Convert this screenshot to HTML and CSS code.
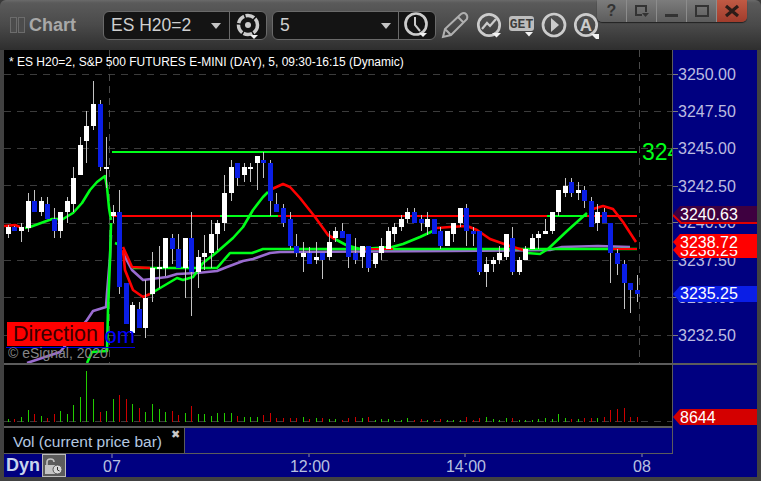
FILE: index.html
```html
<!DOCTYPE html>
<html lang="en">
<head>
<meta charset="utf-8">
<title>Chart</title>
<link rel="stylesheet" href="styles.css">
</head>
<body>
<div class="window">
  <header class="titlebar">
    <div class="title">
      <span class="grip"></span><span class="grip"></span>
      <span class="title-text">Chart</span>
    </div>
    <div class="combo combo-symbol">
      <span class="combo-value">ES H20=2</span>
      <span class="caret"></span>
      <span class="combo-btn">
        <svg class="icon-24" viewBox="0 0 26 28">
          <circle class="ring-dash" cx="13" cy="13" r="9.500"/>
          <circle class="fill-light" cx="13" cy="13" r="3"/>
          <path class="fill-white" d="M15 23h8l-4 4z"/>
        </svg>
      </span>
    </div>
    <div class="combo combo-interval">
      <span class="combo-value">5</span>
      <span class="caret"></span>
      <span class="combo-btn">
        <svg class="icon-24" viewBox="0 0 26 28">
          <circle class="ring" cx="12" cy="12" r="10.500"/>
          <path class="stroke-thin" d="M11 5v8l5 6"/>
          <path class="fill-white" d="M15 21h8l-4 4z"/>
        </svg>
      </span>
    </div>
    <svg class="tools" viewBox="436 0 162 50">
      <path class="stroke-pencil" d="M442 37l2-8 16-15q3-2 5 0t1 5l-16 16zM444 29l6 6M457 17l6 6"/>
      <circle class="ring" cx="488" cy="25" r="10.700"/>
      <path class="stroke-zig" d="M481 29l5-6 3 3 6-7"/>
      <path class="fill-white" d="M491 33h9l-4.500 4.500z"/>
      <rect class="get-bg" x="508" y="16" width="25" height="15" rx="3"/>
      <text class="get-text" x="520.500" y="28">GET</text>
      <path class="fill-white" d="M524 32h8l-4 4.500z"/>
      <circle class="ring" cx="553" cy="25" r="11"/>
      <path class="fill-light" d="M550 18l8 7-8 7z"/>
      <circle class="ring" cx="585" cy="25" r="10.700"/>
      <text class="a-text" x="585" y="31">A</text>
      <path class="fill-white" d="M590 34h8v5h-3z"/>
    </svg>
    <div class="controls">
      <span class="ctl">?</span>
      <span class="ctl"><svg class="ctl-icon" viewBox="0 0 16 14"><path class="ctl-stroke" d="M12 8V2H2v9h6"/><path class="ctl-fill" d="M8 9h7l-3.500 4z"/></svg></span>
      <span class="ctl"><svg class="ctl-icon" viewBox="0 0 16 14"><rect class="ctl-fill" x="1" y="10" width="13" height="3"/></svg></span>
      <span class="ctl"><svg class="ctl-icon" viewBox="0 0 16 14"><path class="ctl-stroke" d="M2 2h12v10H2z"/></svg></span>
      <span class="ctl ctl-close"><svg class="ctl-icon" viewBox="0 0 16 14"><path class="ctl-x" d="M2 2l12 10M14 2L2 12"/></svg></span>
    </div>
  </header>

  <div class="panes">
    <div class="row row-price">
      <div class="plot">
        <svg id="chart" class="plot-svg" viewBox="4 50 668 313"></svg>
        <div class="study-title">* ES H20=2, S&amp;P 500 FUTURES E-MINI (DAY), 5, 09:30-16:15 (Dynamic)</div>
        <div class="link-text">om</div>
        <div class="direction">Direction</div>
        <div class="copyright">© eSignal, 2020</div>
      </div>
      <svg id="axis" class="axis-svg" viewBox="673 50 84 313"></svg>
    </div>

    <div class="row row-volume">
      <svg id="volume" class="vol-svg" viewBox="4 365 668 61"></svg>
      <svg class="axis-svg" viewBox="673 365 84 61">
        <path class="badge-vol" d="M673 417l7-8h77v16h-77z"/>
        <text class="badge-text" x="680" y="423">8644</text>
      </svg>
    </div>

    <div class="row row-legend">
      <div class="vol-legend">
        <span class="vol-name">Vol (current price bar)</span>
        <span class="vol-close">✖</span>
      </div>
    </div>

    <div class="row row-time">
      <span class="dyn">Dyn</span>
      <span class="lock">
        <svg class="lock-icon" viewBox="0 0 20 18">
          <path class="lock-stroke" d="M3 9V5q0-3 3.500-3T10 5"/>
          <rect class="lock-fill" x="1" y="8" width="10" height="9"/>
          <circle class="lock-clock" cx="13.500" cy="12.500" r="4.500"/>
          <path class="lock-hand" d="M13.500 10v3l2 1"/>
        </svg>
      </span>
      <svg class="time-svg" viewBox="65 455 692 22">
        <path class="tick" d="M112 455v4M309 455v3M465 455v3M642 455v3"/>
        <text class="time-text" x="112" y="473">07</text>
        <text class="time-text" x="310" y="473">12:00</text>
        <text class="time-text" x="466" y="473">14:00</text>
        <text class="time-text" x="642" y="473">08</text>
      </svg>
    </div>
  </div>
</div>
<script src="chart.js"></script>
</body>
</html>
```

FILE: styles.css
```css
* { box-sizing: border-box; }
html, body { margin: 0; padding: 0; background: #3a3a3a; }
body { width: 761px; height: 481px; overflow: hidden; font-family: "Liberation Sans", Arial, sans-serif; }

.window { width: 761px; height: 481px; display: flex; flex-direction: column; padding: 0 4px 4px; background: #414141; border-radius: 6px 6px 0 0; }

.titlebar { height: 50px; margin: 0 -4px; padding: 11px 0 0 10px; display: flex; align-items: flex-start; position: relative; background: linear-gradient(#6a6a6a 0, #5a5a5a 3px, #4a4a4a 25px, #2e2e2e 50px); border-radius: 6px 6px 0 0; }
.title { width: 93px; height: 28px; display: flex; align-items: center; }
.grip { width: 7px; height: 16px; margin-right: 1px; border: 1px solid #6c6c6c; background: #4c4c4c; }
.title-text { margin-left: 3px; font-size: 18px; font-weight: 700; color: #a8a8a8; }

.combo { height: 29px; display: flex; align-items: center; background: #141414; border: 1px solid #6a6a6a; border-radius: 6px; position: relative; }
.combo-symbol { width: 164px; margin-right: 5px; }
.combo-interval { width: 164px; margin-right: 1px; }
.combo-value { margin-left: 7px; font-size: 17.500px; color: #cfcfcf; flex: 1; white-space: nowrap; }
.caret { width: 0; height: 0; border-left: 5px solid transparent; border-right: 5px solid transparent; border-top: 6px solid #c4c4c4; margin-right: 7px; }
.combo-btn { width: 37px; height: 27px; border-left: 1px solid #6a6a6a; display: flex; justify-content: center; align-items: center; }
.combo-symbol .caret { margin-right: 8px; }
.icon-24 { width: 26px; height: 28px; }

.ring { fill: none; stroke: #cccccc; stroke-width: 2.700; }
.ring-dash { fill: none; stroke: #cccccc; stroke-width: 3.500; stroke-dasharray: 9 1.500; }
.stroke-thin { fill: none; stroke: #cccccc; stroke-width: 2; }
.stroke-pencil { fill: none; stroke: #b0b0b0; stroke-width: 2; }
.stroke-zig { fill: none; stroke: #cccccc; stroke-width: 2.200; }
.fill-white { fill: #f2f2f2; }
.fill-light { fill: #cccccc; }
.get-bg { fill: #bdbdbd; }
.get-text { font-family: "Liberation Mono", monospace; font-size: 13px; font-weight: 700; fill: #3c3c3c; text-anchor: middle; }
.a-text { font-family: "Liberation Sans", Arial, sans-serif; font-size: 17px; font-weight: 700; fill: #cccccc; text-anchor: middle; }
.tools { width: 162px; height: 50px; margin-top: -11px; flex: none; }

.controls { position: absolute; top: 0; left: 597px; width: 150px; height: 22px; display: flex; border-radius: 0 0 5px 5px; overflow: hidden; box-shadow: 0 1px 1px #222; }
.ctl { width: 30px; height: 22px; display: flex; align-items: center; justify-content: center; background: linear-gradient(#7c7c7c, #5c5c5c); border-right: 1px solid #8c8c8c; font-size: 16px; font-weight: 700; color: #333; }
.ctl-close { background: linear-gradient(#c05a44, #a03c2c); border-right: 0; }
.ctl-icon { width: 16px; height: 14px; }
.ctl-stroke { fill: none; stroke: #333; stroke-width: 2; }
.ctl-fill { fill: #333; }
.ctl-x { fill: none; stroke: #2c1c18; stroke-width: 3.200; }

.panes { flex: 1; display: flex; flex-direction: column; background: #000080; }
.row { display: flex; }
.row-price { border-bottom: 2px solid #5c5c5c; height: 315px; }
.plot { width: 668px; height: 313px; position: relative; overflow: hidden; background: #000; }
.plot-svg { width: 668px; height: 313px; display: block; }
.axis-svg { width: 85px; height: 100%; display: block; border-left: 1px solid #5c5c5c; }

.row-volume { height: 62px; }
.vol-svg { width: 668px; height: 61px; display: block; background: #000; }
.row-volume .axis-svg { height: 61px; }
.row-legend { height: 28px; border-top: 2px solid #5c5c5c; margin-top: -1px; width: 669px; border-right: 1px solid #5c5c5c; border-bottom: 1px solid #5c5c5c; }
.vol-legend { width: 181px; height: 100%; display: flex; position: relative; background: #000; border-right: 1px solid #5c5c5c; }
.vol-name { margin: 5px 0 0 9px; font-size: 15.500px; color: #b4c8e0; white-space: nowrap; }
.vol-close { position: absolute; left: 167px; top: 0; font-size: 11px; color: #c8c8c8; font-family: "DejaVu Sans", sans-serif; }
.row-time { height: 23px; align-items: flex-start; }
.dyn { width: 38px; padding-left: 2px; font-size: 18px; font-weight: 700; color: #c8d4ec; line-height: 22px; }
.lock { width: 24px; height: 23px; flex: none; display: flex; align-items: center; justify-content: center; background: #5c5c5c; border: 1px solid #bcbcbc; }
.lock-icon { width: 20px; height: 18px; }
.lock-stroke { fill: none; stroke: #c4c4c4; stroke-width: 1.600; }
.lock-fill { fill: #c4c4c4; }
.lock-clock { fill: #d8d8d8; stroke: #555; }
.lock-hand { fill: none; stroke: #333; }
.time-svg { width: 692px; height: 22px; display: block; flex: none; margin-left: -1px; }
.tick { fill: none; stroke: #8a8ab0; stroke-width: 1; }
.time-text { font-family: "Liberation Sans", Arial, sans-serif; font-size: 16px; fill: #b8c0e0; text-anchor: middle; }

.study-title { position: absolute; left: 5px; top: 5px; font-size: 12px; color: #fff; white-space: nowrap; }
.direction { position: absolute; left: 3px; top: 272px; width: 97px; height: 24px; background: #ff0000; color: #3a0000; font-size: 21.500px; line-height: 24px; text-align: center; }
.link-text { position: absolute; left: 2px; top: 274px; width: 129px; height: 24px; border-bottom: 1px solid #0000e0; color: #0000ff; font-size: 22px; line-height: 23px; text-align: right; }
.copyright { position: absolute; left: 4px; top: 295px; width: 100px; height: 17px; overflow: hidden; font-size: 14px; line-height: 17px; color: #868686; white-space: nowrap; }

.grid { stroke: #3c3c3c; stroke-width: 1; stroke-dasharray: 7 6; fill: none; }
.grid-v { stroke: #4a4a4a; stroke-width: 1; stroke-dasharray: 7 5; fill: none; }
.line { fill: none; stroke-width: 2.600; stroke-linejoin: round; }
.line-flat { stroke-width: 2; shape-rendering: crispEdges; }
.line-green { stroke: #00ff19; }
.line-red { stroke: #ff0000; }
.line-purple { stroke: #9a6cd0; }
.wick { fill: #c4c4c4; }
.body-up { fill: #ffffff; }
.body-down { fill: #0a1ee6; }
.last-level { font-family: "Liberation Sans", Arial, sans-serif; font-size: 23px; fill: #00ff19; }
.bar-up { fill: #22cc00; }
.bar-down { fill: #cc0000; }

.axis-text { font-family: "Liberation Sans", Arial, sans-serif; font-size: 16px; fill: #bcbce0; }
.axis-tick { stroke: #7c7c7c; stroke-width: 1; fill: none; }
.badge-text { font-family: "Liberation Sans", Arial, sans-serif; font-size: 16px; fill: #fff; }
.badge-purple { fill: #3e0040; }
.badge-red { fill: #ff0000; }
.badge-blue { fill: #0a1ee6; }
.badge-vol { fill: #d40000; }
.badge-rule { fill: none; stroke: #e00000; stroke-width: 2; }
```

FILE: chart.js
```js
var NS = "http://www.w3.org/2000/svg";
function el(parent, tag, attrs, text) {
  var e = document.createElementNS(NS, tag);
  for (var k in attrs) e.setAttribute(k, attrs[k]);
  if (text) e.textContent = text;
  parent.appendChild(e);
  return e;
}
function xOf(i) { return Math.round(27.5 + 6.55 * (i - 3)); }

/* top, bottom, high, low, up(1)/down(0) */
var candles = [
[227,234,225,238,1],[227,231,226,231,0],[227,231,223,242,1],[201,228,193,232,1],[201,212,190,212,0],
[201,212,197,216,1],[204,219,197,219,0],[219,231,208,238,0],[212,231,212,238,1],[201,212,197,223,1],
[178,204,167,212,1],[145,175,137,175,1],[126,141,111,163,1],[104,126,81,130,1],[104,167,100,171,0],
[167,169,137,188,1],[212,216,205,223,1],[212,287,190,294,0],[283,324,283,324,0],[305,333,302,343,1],
[309,328,302,328,0],[298,328,280,338,1],[268,294,252,302,1],[267,269,246,288,1],[238,268,238,276,1],
[238,249,234,264,0],[249,268,234,268,0],[238,268,238,298,1],[238,272,212,316,0],[257,272,250,288,1],
[253,257,235,270,1],[234,253,220,268,1],[223,234,220,250,1],[193,223,175,231,1],[167,193,160,201,1],
[163,178,163,186,0],[167,175,163,182,1],[167,169,163,182,1],[156,163,156,190,1],[160,163,152,178,0],
[163,201,160,216,0],[204,212,193,212,0],[208,223,204,227,0],[219,246,212,249,0],[246,253,234,257,0],
[253,257,242,272,1],[253,264,247,264,0],[257,260,242,264,1],[253,260,253,279,0],[242,257,231,260,1],
[231,238,227,242,1],[231,238,223,238,0],[234,257,234,268,0],[253,260,238,264,0],[246,257,246,268,1],
[246,268,246,272,0],[253,264,253,268,1],[246,253,238,260,1],[231,249,227,249,1],[227,234,223,242,1],
[219,227,215,231,1],[212,219,208,223,1],[212,223,208,223,0],[219,223,215,231,0],[219,227,212,235,1],
[219,234,219,234,0],[231,246,227,249,0],[231,246,231,246,1],[223,234,223,242,1],[208,223,208,227,1],
[208,231,204,246,0],[231,234,227,246,0],[231,272,231,275,0],[264,272,257,287,1],[260,264,257,272,1],
[253,260,246,264,1],[234,257,234,260,1],[238,272,227,275,0],[260,272,257,275,1],[249,260,246,260,1],
[238,249,234,249,1],[234,238,231,249,1],[231,234,219,234,1],[212,231,212,234,1],[190,212,190,216,1],
[186,193,178,197,1],[182,193,178,197,0],[190,193,182,200,1],[190,201,186,208,0],[201,227,197,227,0],
[212,223,204,231,1],[212,223,208,223,0],[223,253,223,283,0],[253,264,249,275,0],[264,283,260,309,0],
[283,290,283,313,0],[290,294,275,302,0]
];

var vol = [3,-3,5,12,-8,6,-4,-8,11,8,17,25,51,23,-10,11,23,-27,-23,18,-14,10,18,13,10,-11,-7,9,-16,8,8,6,9,9,9,-6,
5,5,5,-7,-9,-4,-4,-4,-4,5,-3,4,-4,3,3,-2,-4,-5,4,-5,2,3,3,2,2,4,-2,-3,2,-2,-3,2,
2,2,-5,-2,-4,5,3,2,4,-4,2,2,2,3,4,3,8,4,-3,3,-4,-4,4,-5,-12,-13,-14,-5,-5];

var purple = [
"27,363 60,352 87,320 93,311 106,307 107,293 110,257 111,235",
"123,253 132,270 143,280 167,277 177,274 197,273 217,271 227,267 243,261 253,259 270,253 280,252 450,251 550,250 562,247 598,246 630,247"
];
var green = [
"112,152 637,152",
"220,216 278,216",
"547,216 587,216",
"87,363 92,352 107,351 108,310 110,260 111,223",
"115,243 120,245",
"133,268 217,268 230,253 252,253 263,249 637,249",
"25,228 30,227 52,219 63,219 73,213 82,203 90,190 97,182 105,176 107,187 109,208 111,220",
"150,294 177,278 183,280 193,277 203,263 217,252 233,238 243,227 253,210 263,197 268,192",
"335,239 346,245 360,249 392,247 403,244 420,237 433,231",
"527,253 540,254 548,249 567,231 587,213"
];
var red = [
"112,216 220,216",
"278,216 547,216",
"587,216 637,216",
"4,226 15,225 20,227",
"123,247 132,267 150,268",
"123,250 125,270 133,290 143,297 150,294",
"272,189 283,184 290,187 300,198 315,217 328,235 335,239",
"437,228 450,227 467,226 477,230 490,239 507,245 523,250",
"593,209 603,206 613,209 623,222 636,242",
"363,249 393,249",
"610,249 637,249"
];

function drawLine(points, colour) {
  var flat = /^\d+,(\d+) \d+,\1$/.test(points);
  el(chart, "polyline", { "class": "line " + colour + (flat ? " line-flat" : ""), points: points });
}

var chart = document.getElementById("chart");
[74,111,148,185,223,260,297,335].forEach(function (y) {
  el(chart, "line", { "class": "grid", x1: 4, y1: y + 0.5, x2: 672, y2: y + 0.5 });
});
[109.5, 639.5].forEach(function (x) {
  el(chart, "line", { "class": "grid-v", x1: x, y1: 50, x2: x, y2: 363 });
});
purple.forEach(function (p) { drawLine(p, "line-purple"); });
green.forEach(function (p) { drawLine(p, "line-green"); });
red.forEach(function (p) { drawLine(p, "line-red"); });
candles.forEach(function (c, i) {
  var x = xOf(i);
  el(chart, "rect", { "class": "wick", x: x, y: c[2], width: 1, height: c[3] - c[2] });
  el(chart, "rect", { "class": c[4] ? "body-up" : "body-down", x: x - 2, y: c[0], width: 5, height: c[1] - c[0] });
});
el(chart, "text", { "class": "last-level", x: 642, y: 160 }, "3245.00");

var volume = document.getElementById("volume");
el(volume, "line", { "class": "grid", x1: 4, y1: 421.5, x2: 672, y2: 421.5 });
vol.forEach(function (v, i) {
  var h = Math.abs(v);
  el(volume, "rect", { "class": v > 0 ? "bar-up" : "bar-down", x: xOf(i), y: 422 - h, width: 1, height: h });
});

var axis = document.getElementById("axis");
[[74,"3250.00"],[111,"3247.50"],[148,"3245.00"],[186,"3242.50"],[222,"3240.00"],[260,"3237.50"],[297,"3235.00"],[335,"3232.50"]].forEach(function (a) {
  el(axis, "line", { "class": "axis-tick", x1: 673, y1: a[0] + 0.5, x2: 678, y2: a[0] + 0.5 });
  el(axis, "text", { "class": "axis-text", x: 678, y: a[0] + 6 }, a[1]);
});
function badge(cls, y, label, base) {
  el(axis, "path", { "class": cls, d: "M673 " + (y + 8) + "l7-8h77v16h-77z" });
  el(axis, "text", { "class": "badge-text", x: 680, y: base }, label);
}
badge("badge-purple", 206, "3240.63", 220);
el(axis, "path", { "class": "badge-rule", d: "M673 215l8 8h76" });
badge("badge-red", 242, "3238.25", 256);
badge("badge-red", 234, "3238.72", 248);
badge("badge-blue", 286, "3235.25", 299);
```
